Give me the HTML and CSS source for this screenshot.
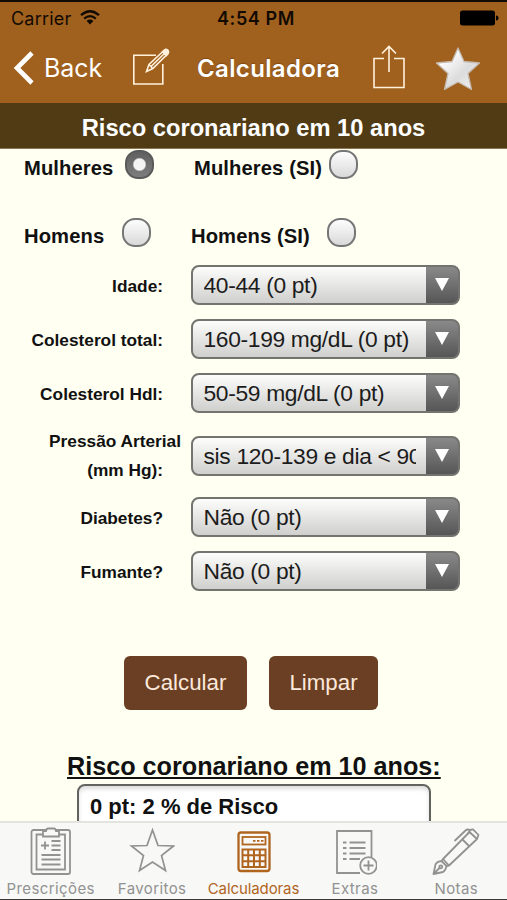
FILE: index.html
```html
<!DOCTYPE html>
<html lang="pt">
<head>
  <meta charset="UTF-8" />
  <meta name="viewport" content="width=device-width, initial-scale=1.0"/>
  <title>Calculadora</title>
  <link rel="stylesheet" href="styles.css">
</head>
<body>

<header>
  <div class="status">
    <span class="carrier">Carrier</span>
    <svg class="wifi" width="20" height="15" viewBox="0 0 20 15" fill="none" stroke="#110a03" stroke-width="2.3">
      <path d="M1 5.2Q10-2.6 19 5.2M4.2 8.6Q10 3.6 15.8 8.6"/>
      <path d="M6.6 11Q10 8.2 13.4 11L10 14.5Z" fill="#110a03" stroke="none"/>
    </svg>
    <span class="hora">4:54 PM</span>
    <svg class="bateria" width="39" height="16" viewBox="0 0 39 16">
      <rect x="0" y="0.5" width="35" height="15" rx="2.5"/>
      <path d="M36 5.5Q38.5 5.5 38.5 8T36 10.5Z"/>
    </svg>
  </div>
  <nav>
    <a class="voltar">
      <svg width="21" height="34" viewBox="0 0 21 34" fill="none" stroke="#fff" stroke-width="4.6">
        <path d="M19 2L4 17L19 32"/>
      </svg>
      <span>Back</span>
    </a>
    <svg class="editar" width="38" height="38" viewBox="0 0 38 38" fill="none" stroke="#fff1dc" stroke-width="1.6">
      <path d="M24 7.3H1.8V36H30.8V16"/>
      <path d="M14.5 23.5L17 16.5L32.5 2Q34 .8 35.500 2.2T36 5.5L20.8 20.5ZM17 16.5L20.8 20.5M19 18.5L33 5"/>
      <path d="M30.500 4L34.3 7.5L36 5.5Q37 3.5 35.500 2.2T32.500 2Z" fill="#fff1dc"/>
    </svg>
    <h1>Calculadora</h1>
    <svg class="compartilhar" width="32" height="44" viewBox="0 0 32 44" fill="none" stroke="#fff1dc" stroke-width="1.6">
      <path d="M11 13.5H1V42.5H31V13.5H21M16 27V2M9 8.5L16 1.500L23 8.5"/>
    </svg>
    <svg class="estrela" width="46" height="46" viewBox="0 0 46 46">
      <defs>
        <linearGradient id="prata" x1="0" y1="0" x2="1" y2="1">
          <stop offset="0.2" stop-color="#fff"/>
          <stop offset="0.6" stop-color="#dcdcdc"/>
          <stop offset="1" stop-color="#f6f6f6"/>
        </linearGradient>
      </defs>
      <path d="M23 2L29 15.5L44.5 17L33 27.5L36.5 43.5L23 36L9.500 43.5L13 27.5L1.500 17L17 15.5Z" fill="url(#prata)" stroke="#c3b9ae" stroke-width="1.3" stroke-linejoin="round"/>
    </svg>
  </nav>
</header>

<h2 class="faixa">Risco coronariano em 10 anos</h2>

<main>
  <form>
    <div class="sexo">
      <label class="m">Mulheres <input type="radio" name="sexo" checked></label>
      <label class="msi">Mulheres (SI) <input type="radio" name="sexo"></label>
    </div>
    <div class="sexo">
      <label class="h">Homens <input type="radio" name="sexo"></label>
      <label class="hsi">Homens (SI) <input type="radio" name="sexo"></label>
    </div>

    <div class="campo">
      <label>Idade:</label>
      <div class="caixa"><select><option>40-44 (0 pt)</option></select></div>
    </div>
    <div class="campo">
      <label>Colesterol total:</label>
      <div class="caixa"><select><option>160-199 mg/dL (0 pt)</option></select></div>
    </div>
    <div class="campo">
      <label>Colesterol Hdl:</label>
      <div class="caixa"><select><option>50-59 mg/dL (0 pt)</option></select></div>
    </div>
    <div class="campo pressao">
      <label><span>Pressão Arterial</span><br/>(mm Hg):</label>
      <div class="caixa"><select><option>sis 120-139 e dia &lt; 90 (0 pt)</option></select></div>
    </div>
    <div class="campo">
      <label>Diabetes?</label>
      <div class="caixa"><select><option>Não (0 pt)</option></select></div>
    </div>
    <div class="campo">
      <label>Fumante?</label>
      <div class="caixa"><select><option>Não (0 pt)</option></select></div>
    </div>

    <div class="botoes">
      <button type="button" class="calcular">Calcular</button>
      <button type="button" class="limpar">Limpar</button>
    </div>
  </form>

  <h3>Risco coronariano em 10 anos:</h3>
  <div class="resultado">0 pt: 2 % de Risco</div>
</main>

<footer>
  <a>
    <svg width="44" height="50" viewBox="0 0 44 50" fill="none" stroke="#929292" stroke-width="1.8">
      <rect x="2.5" y="4" width="38.5" height="44" rx="2"/>
      <path d="M13.5 8.5H7.5V43.5H36V8.5H30"/>
      <path d="M14 5H17Q17.5 2.5 19 2.5H25Q26.5 2.5 27 5H30V10.5H14Z" fill="#f8f8f6"/>
      <path d="M12 19.5H20M16 15.5V23.5M22.5 15H31.5M22.5 19.5H31.5M22.5 24H31.5M12.5 29H31.5M12.5 33.5H31.5M12.5 38.5H31.5"/>
    </svg>
    <span class="largo">Prescrições</span>
  </a>
  <a>
    <svg width="46" height="50" viewBox="0 0 46 50" fill="none" stroke="#929292" stroke-width="1.7">
      <path d="M23.5 4L29 19.5L44.5 20L32.5 29.5L36.5 44.5L23.5 36L10.5 44.5L14.5 29.5L2.5 20L18 19.5Z"/>
    </svg>
    <span class="largo">Favoritos</span>
  </a>
  <a class="ativo">
    <svg width="44" height="50" viewBox="0 0 44 50" fill="none" stroke="#b0651f" stroke-width="1.8">
      <rect x="6.5" y="6.5" width="31" height="38.5" rx="2.5" stroke-width="2.3"/>
      <rect x="10.5" y="11" width="23" height="7.5"/>
      <path d="M21 14.8H31.5" stroke-dasharray="2.5 1.5"/>
      <path d="M10.5 23.5H33.5V41H10.5ZM10.5 29.3H33.5M10.5 35.2H33.5M16.2 23.5V41M22 23.5V41M27.8 23.5V41" stroke-width="2"/>
    </svg>
    <span>Calculadoras</span>
  </a>
  <a>
    <svg width="44" height="50" viewBox="0 0 44 50" fill="none" stroke="#929292" stroke-width="1.8">
      <path d="M27 47H4V5H38.5V31"/>
      <path d="M10 16.5H13.5M10 22H13.5M10 27.5H13.5M10 33H13.5M16.5 16.5H32.5M16.5 22H32.5M16.5 27.5H32.5M16.5 33H27"/>
      <circle cx="35.5" cy="39.5" r="8.3"/>
      <path d="M30.5 39.5H40.5M35.5 34.5V44.5"/>
    </svg>
    <span class="largo">Extras</span>
  </a>
  <a>
    <svg width="50" height="50" viewBox="0 0 50 50" fill="none" stroke="#929292" stroke-width="1.8" stroke-linejoin="round">
      <path d="M2.5 48L4.5 38.5Q6 35.5 10.5 35L15.5 40Q15 44 12 46ZM3 47.5L9 41.5M12 33L38.5 6L46 13L18 39.5ZM12 33L10.5 35M18 39.5L15.5 40M31.5 13.5L38 20"/>
      <circle cx="9.8" cy="40.8" r="1.5"/>
      <path d="M23.5 15L34.5 4.5Q36.5 2.8 39 4L42 3.3L47.5 9L46 13M39 4L37 8"/>
    </svg>
    <span class="largo">Notas</span>
  </a>
</footer>

</body>
</html>
```

FILE: styles.css
```css
* {
  box-sizing: border-box;
}

body {
  font-family: "Liberation Sans", Arial, sans-serif;
  margin: 0;
  height: 900px;
  width: 507px;
  display: flex;
  flex-direction: column;
  overflow: hidden;
  background: #fffff2;
  color: #111;
  border-bottom: 1px solid #3c3836;
}

h1,
h2,
h3 {
  margin: 0;
}

svg {
  display: block;
  flex: none;
}

header {
  height: 103px;
  flex: none;
  background: #a1611e;
  border-top: 2px solid #120a04;
  font-family: Inter, sans-serif;
}

.status {
  height: 33px;
  display: flex;
  align-items: center;
  padding: 0 8px 0 11px;
  font-size: 18px;
  color: #110a03;
}

.carrier {
  width: 61px;
  letter-spacing: 0.2px;
}

.wifi {
  margin-left: 8px;
  margin-top: -2px;
}

.hora {
  margin-left: 117px;
  font-weight: 600;
  font-size: 18px;
  letter-spacing: 0.6px;
}

.bateria {
  margin-left: auto;
  margin-top: -2px;
}

nav {
  display: flex;
  align-items: center;
  height: 66px;
  color: #fff;
}

.voltar {
  display: flex;
  align-items: center;
  gap: 10px;
  width: 119px;
  padding-left: 13px;
  font-size: 25px;
  letter-spacing: -0.1px;
}

.editar {
  margin-left: 13px;
  margin-top: -3px;
}

h1 {
  width: 146px;
  margin-left: 27px;
  font-size: 24px;
  font-weight: 600;
  letter-spacing: 0.35px;
  text-shadow: 0 -1px 1px rgba(80, 40, 0, 0.4);
  white-space: nowrap;
}

.compartilhar {
  margin-left: 30px;
  margin-top: -2px;
}

.estrela {
  margin-left: 30px;
  margin-top: 2px;
}

.faixa {
  height: 46px;
  flex: none;
  background: #503b15;
  border-bottom: 1px solid #8b7955;
  color: #fff;
  font-size: 23.7px;
  line-height: 50px;
  text-align: center;
}

main {
  flex: 1;
  min-height: 0;
  overflow: hidden;
}

.sexo {
  display: flex;
  height: 68px;
  font-size: 20.2px;
  font-weight: bold;
}

.sexo label {
  display: flex;
  justify-content: space-between;
  line-height: 38px;
  letter-spacing: 0.1px;
  white-space: nowrap;
}

.m {
  width: 130px;
  margin-left: 24px;
}

.msi {
  width: 164px;
  margin-left: 40px;
}

.h {
  width: 127px;
  margin-left: 24px;
}

.hsi {
  width: 165px;
  margin-left: 40px;
}

input[type="radio"] {
  appearance: none;
  width: 29px;
  height: 29px;
  margin: 0;
  margin-top: 1px;
  border: 2px solid #767676;
  border-radius: 13px;
  background: linear-gradient(#fdfdfd, #d9d9d9);
}

input[type="radio"]:checked {
  border-color: #5a5a5a;
  background: radial-gradient(circle, #f4f4f4 5.5px, transparent 7px), linear-gradient(#606060, #7d7d7d);
}

.campo {
  display: flex;
  align-items: center;
  height: 40px;
  margin-bottom: 14px;
}

.sexo + .campo {
  margin-top: -20px;
}

.campo label {
  width: 163px;
  text-align: right;
  font-size: 17.3px;
  font-weight: bold;
  padding-top: 3px;
  white-space: nowrap;
}

.pressao {
  height: 62px;
  margin-top: -2px;
  margin-bottom: 10px;
}

.pressao label {
  line-height: 29px;
  padding-top: 0;
}

.pressao span {
  margin-right: -18px;
}

.caixa {
  position: relative;
  width: 269px;
  margin-left: 27.5px;
}

select {
  display: block;
  appearance: none;
  width: 100%;
  height: 40px;
  padding: 0 42px 1px 11px;
  border: 2px solid #737370;
  border-radius: 8px;
  color: #1c1c1c;
  font-family: inherit;
  font-size: 22.8px;
  letter-spacing: -0.33px;
  background: linear-gradient(#898989, #565656) right / 32px 100% no-repeat, linear-gradient(#fdfdfb, #cfcfcd);
}

/* seta do select */
.caixa::after {
  content: "";
  position: absolute;
  right: 11px;
  top: 13px;
  border: 7px solid transparent;
  border-top: 13px solid #fff;
  border-bottom: 0;
}

.botoes {
  display: flex;
  gap: 22px;
  margin: 65px 0 0 124px;
}

button {
  height: 54px;
  padding: 0;
  border: 0;
  border-radius: 6px;
  background: #6b3f24;
  color: #fbe9dc;
  font-family: inherit;
  font-size: 22.3px;
}

.calcular {
  width: 123px;
}

.limpar {
  width: 109px;
}

h3 {
  margin: 42px 0 0 67px;
  font-size: 25.2px;
  line-height: 29px;
  text-decoration: underline;
  text-decoration-thickness: 2px;
  text-decoration-skip-ink: none;
  text-underline-offset: 2px;
  white-space: nowrap;
}

.resultado {
  width: 354px;
  height: 80px;
  margin: 3px 0 0 77px;
  padding: 8px 11px;
  border: 2px solid #62625f;
  border-radius: 8px;
  background: #fff;
  box-shadow: inset 0 3px 4px #ddd;
  font-size: 22px;
  font-weight: bold;
}

footer {
  height: 78px;
  flex: none;
  display: flex;
  background: #f8f8f6;
  border-top: 2px solid #e4e4df;
  font-family: Inter, sans-serif;
  font-size: 15px;
  color: #929292;
}

footer a {
  flex: 1;
  display: flex;
  flex-direction: column;
  align-items: center;
  padding-top: 3px;
}

footer span {
  line-height: 20px;
  margin-top: 3px;
  letter-spacing: -0.1px;
}

footer .largo {
  letter-spacing: 0.4px;
}

.ativo {
  color: #b0651f;
}
```
